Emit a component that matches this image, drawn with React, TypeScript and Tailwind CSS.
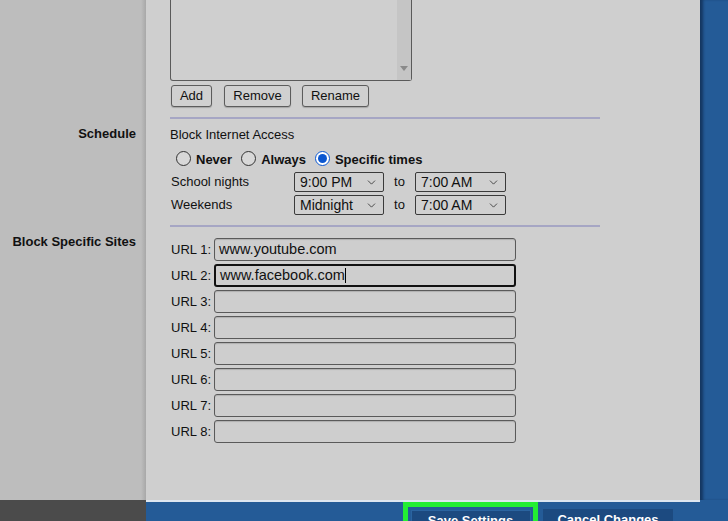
import React from 'react';
import { ChevronDown } from 'lucide-react';

const font = "font-['Liberation_Sans',Arial,sans-serif]";

const Radio = ({ checked, label }: { checked?: boolean; label: string }) => (
  <div className="flex items-center">
    {checked ? (
      <span className="w-[15px] h-[15px] rounded-full border-[1.5px] border-[#0b57d0] bg-white flex items-center justify-center">
        <span className="w-[9px] h-[9px] rounded-full bg-[#0b57d0]" />
      </span>
    ) : (
      <span className="w-[15px] h-[15px] rounded-full border border-[#333] bg-[#d8d8d8]" />
    )}
    <span className="ml-[5px] mt-[3px] text-[13px] font-bold text-[#111]">{label}</span>
  </div>
);

const Select = ({ value, width }: { value: string; width: string }) => (
  <div
    className={`${width} h-[20px] border border-[#3a3a3a] rounded-[2px] bg-[#d0d0d0] flex items-center justify-between pl-[5px] pr-[5px] text-[14px] text-[#111]`}
  >
    <span>{value}</span>
    <ChevronDown size={13} strokeWidth={1.4} className="text-[#222]" />
  </div>
);

const TimeRow = ({ label, from, to }: { label: string; from: string; to: string }) => (
  <div className="flex items-center h-[20px]">
    <span className="w-[124px] pl-px text-[13px] text-[#111]">{label}</span>
    <Select value={from} width="w-[90px]" />
    <span className="w-[31px] text-center text-[13px] text-[#111]">to</span>
    <Select value={to} width="w-[91px]" />
  </div>
);

const UrlRow = ({ n, value, focused }: { n: number; value?: string; focused?: boolean }) => (
  <div className="flex items-center h-[23px]">
    <span className="w-[44px] pl-px text-[13px] text-[#111]">URL {n}:</span>
    <div
      className={`w-[302px] h-[23px] rounded-[3px] bg-[#cecece] flex items-center px-[4px] text-[14.5px] text-[#111] ${
        focused ? 'border-2 border-[#111]' : 'border border-[#5a5a5a] shadow-[inset_0_1px_1px_rgba(0,0,0,0.15)]'
      }`}
    >
      {value}
      {focused && <span className="w-px h-[15px] bg-black" />}
    </div>
  </div>
);

const Divider = () => <div className="w-[430px] h-[2px] bg-[#a6a6c4]" />;

const side = 'bg-[linear-gradient(to_right,#bdbdbd_141px,#a8a8a8_146px)]';

export default function App() {
  return (
    <div className={`${font} w-[728px] h-[521px] overflow-hidden flex flex-col`}>
      <div className="flex h-[500px]">
        <div className="flex-1 grid grid-cols-[146px_1fr] grid-rows-[119px_108px_1fr]">
          {/* rules list */}
          <div className={side} />
          <div className="bg-[#cfcfcf] pl-[24px]">
            <div className="w-[242px] h-[81px] border border-t-0 border-[#5a5a5a] rounded-b-[3px] flex justify-end">
              <div className="w-[14px] h-full bg-[#c5c5c5] flex items-end justify-center pb-[9px]">
                <span className="w-0 h-0 border-x-[4px] border-x-transparent border-t-[5px] border-t-[#8a8a8a]" />
              </div>
            </div>
            <div className="flex mt-[4px] ml-px">
              {[
                ['Add', 'w-[41px]', ''],
                ['Remove', 'w-[67px]', 'ml-[12px]'],
                ['Rename', 'w-[67px]', 'ml-[11px]'],
              ].map(([t, w, m]) => (
                <button
                  key={t}
                  className={`${w} ${m} h-[22px] border border-[#5c5c5c] rounded-[3px] bg-[#d0d0d0] text-[13px] text-[#111] shadow-[0_1px_1px_rgba(0,0,0,0.2)]`}
                >
                  {t}
                </button>
              ))}
            </div>
            <div className="mt-[10px]">
              <Divider />
            </div>
          </div>

          {/* schedule */}
          <div className={`${side} flex justify-end pr-[10px] pt-[7px]`}>
            <span className="text-[13px] leading-[16px] font-bold text-[#111]">Schedule</span>
          </div>
          <div className="bg-[#cfcfcf] pl-[24px] pt-[8px]">
            <div className="text-[13px] leading-[16px] text-[#111]">Block Internet Access</div>
            <div className="flex items-center h-[18px] mt-[6px] pl-[6px] gap-[9px]">
              <Radio label="Never" />
              <Radio label="Always" />
              <Radio checked label="Specific times" />
            </div>
            <div className="mt-[5px]">
              <TimeRow label="School nights" from="9:00 PM" to="7:00 AM" />
            </div>
            <div className="mt-[3px]">
              <TimeRow label="Weekends" from="Midnight" to="7:00 AM" />
            </div>
            <div className="mt-[10px]">
              <Divider />
            </div>
          </div>

          {/* sites */}
          <div className={`${side} flex justify-end pr-[10px] pt-[7px]`}>
            <span className="text-[13px] leading-[16px] font-bold text-[#111]">Block Specific Sites</span>
          </div>
          <div className="bg-[#cfcfcf] pl-[24px] pt-[11px] flex flex-col gap-[3px]">
            <UrlRow n={1} value="www.youtube.com" />
            <UrlRow n={2} value="www.facebook.com" focused />
            {[3, 4, 5, 6, 7, 8].map((n) => (
              <UrlRow key={n} n={n} />
            ))}
          </div>
        </div>
        <div className="w-[28px] bg-[#245b97] shadow-[inset_4px_0_3px_-1px_rgba(10,30,60,0.6)]" />
      </div>

      {/* action bar */}
      <div className="flex h-[21px]">
        <div className="w-[146px] bg-[#4b4b4b]" />
        <div className="flex-1 bg-[#245b97] flex">
          <div className="w-[554px] border-t-2 border-[#dde6f0] flex">
            <div className="ml-[257px] w-[135px] h-[30px] border-[5px] border-[#22ee33] bg-[#245b97] flex justify-center pt-[3px]">
              <div className="w-[120px] h-[30px] bg-[#1c4a80] border border-[#2a64a0] text-white text-[13px] leading-[16px] font-bold text-center pt-[2px]">
                Save Settings
              </div>
            </div>
            <div className="ml-[5px] mt-[7px] w-[130px] h-[30px] bg-[#1c4a80] text-white text-[13px] leading-[16px] font-bold text-center pt-[3px]">
              Cancel Changes
            </div>
          </div>
        </div>
      </div>
    </div>
  );
}
